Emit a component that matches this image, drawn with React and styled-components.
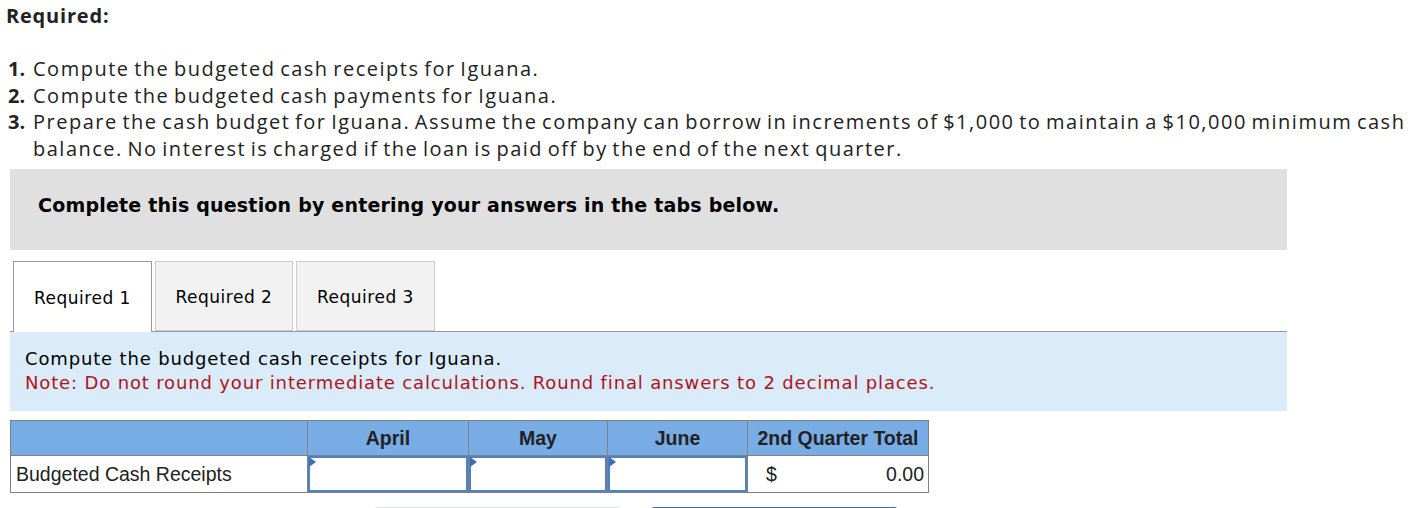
import React from 'react';
import styled, { createGlobalStyle } from 'styled-components';

const GlobalStyle = createGlobalStyle`
  html, body {
    margin: 0;
    padding: 0;
    background: #fff;
  }
  body {
    font-family: "Open Sans", Lato, sans-serif;
    color: #222;
  }
`;

const Page = styled.div`
  padding: 3px 0 0 8px;
  width: 1413px;
  box-sizing: border-box;
`;

const Heading = styled.h3`
  margin: 0 0 0 -2px;
  font-size: 20px;
  font-weight: 700;
  line-height: 26px;
  letter-spacing: 0.8px;
`;

const Steps = styled.ol`
  list-style: none;
  margin: 27px 0 0 0;
  padding: 0;
  font-size: 20px;
  line-height: 26.6px;
  letter-spacing: 1.5px;
  word-spacing: -2px;
`;

const Step = styled.li`
  display: grid;
  grid-template-columns: 25px 1fr;
`;

const StepNum = styled.b`
  font-weight: 700;
  letter-spacing: 0;
`;

const Prompt = styled.div`
  margin: 7px 0 0 2px;
  width: 1277px;
  height: 81px;
  background: #e0e0e0;
  display: flex;
  align-items: center;
  padding: 0 0 10px 28px;
  box-sizing: border-box;
  font-family: "DejaVu Sans", Verdana, sans-serif;
  font-weight: 700;
  font-size: 19px;
  letter-spacing: 0.2px;
  color: #000;
`;

const TabBar = styled.div`
  display: flex;
  gap: 3px;
  margin: 11px 0 0 5px;
  height: 70px;
`;

const Tab = styled.div`
  box-sizing: border-box;
  width: ${p => p.$w}px;
  height: ${p => (p.$active ? 71 : 70)}px;
  display: flex;
  align-items: center;
  justify-content: center;
  font-family: "DejaVu Sans", Verdana, sans-serif;
  font-size: 17px;
  letter-spacing: 0.5px;
  color: #000;
  background: ${p => (p.$active ? '#fff' : '#f2f2f2')};
  border: 1px solid ${p => (p.$active ? '#999' : '#ccc')};
  border-bottom: ${p => (p.$active ? 'none' : '1px solid #ccc')};
  position: relative;
  z-index: 1;
  padding-top: 1px;
`;

const Info = styled.div`
  margin-left: 2px;
  width: 1277px;
  box-sizing: border-box;
  background: #daebf9;
  border-top: 1px solid #999;
  padding: 15px 0 16px 15px;
  font-family: "DejaVu Sans", Verdana, sans-serif;
  font-size: 18px;
  letter-spacing: 0.85px;
  line-height: 24px;
  color: #000;
`;

const Note = styled.div`
  color: #b0141b;
`;

const Grid = styled.table`
  margin: 9px 0 0 2px;
  border-collapse: collapse;
  font-family: "Liberation Sans", Arial, sans-serif;
  font-size: 19.5px;
  color: #222;
`;

const HeadCell = styled.th`
  background: #78ace4;
  border: 1px solid #808080;
  height: 35px;
  width: ${p => p.$w}px;
  padding: 0;
  font-weight: 700;
  text-align: center;
  box-sizing: border-box;
`;

const LabelCell = styled.td`
  border: 1px solid #808080;
  height: 37px;
  padding: 0 0 0 5px;
  text-align: left;
  box-sizing: border-box;
`;

const InputCell = styled.td`
  border: 1px solid #808080;
  padding: 0;
  height: 37px;
  box-sizing: border-box;
  vertical-align: top;
`;

const Field = styled.div`
  position: relative;
  height: 36px;
  box-sizing: border-box;
  border: 2px solid #4f82c3;
  background: #fff;

  &::before {
    content: '';
    position: absolute;
    left: -1px;
    top: -1px;
    border-top: 5px solid transparent;
    border-bottom: 5px solid transparent;
    border-left: 7px solid #3b6fb5;
  }
`;

const TotalCell = styled.td`
  border: 1px solid #808080;
  height: 37px;
  padding: 0 4px 0 18px;
  box-sizing: border-box;
`;

const Total = styled.div`
  display: flex;
  justify-content: space-between;
`;

const Buttons = styled.div`
  display: flex;
  gap: 32px;
  margin: 14px 0 0 367px;
`;

const Button = styled.div`
  width: 245px;
  height: 40px;
  box-sizing: border-box;
  border: 2px solid ${p => (p.$dark ? '#3a6aa8' : '#dbe4ef')};
  background: ${p => (p.$dark ? '#3a6aa8' : '#fff')};
  border-radius: 2px;
`;

export default function App() {
  return (
    <>
      <GlobalStyle />
      <Page>
        <Heading>Required:</Heading>
        <Steps>
          <Step><StepNum>1.</StepNum><span>Compute the budgeted cash receipts for Iguana.</span></Step>
          <Step><StepNum>2.</StepNum><span>Compute the budgeted cash payments for Iguana.</span></Step>
          <Step>
            <StepNum>3.</StepNum>
            <span>
              Prepare the cash budget for Iguana. Assume the company can borrow in increments of $1,000 to maintain a $10,000 minimum cash
              balance. No interest is charged if the loan is paid off by the end of the next quarter.
            </span>
          </Step>
        </Steps>
        <Prompt>Complete this question by entering your answers in the tabs below.</Prompt>
        <TabBar>
          <Tab $active $w={139}>Required 1</Tab>
          <Tab $w={138}>Required 2</Tab>
          <Tab $w={139}>Required 3</Tab>
        </TabBar>
        <Info>
          <div>Compute the budgeted cash receipts for Iguana.</div>
          <Note>Note: Do not round your intermediate calculations. Round final answers to 2 decimal places.</Note>
        </Info>
        <Grid>
          <thead>
            <tr>
              <HeadCell $w={297} />
              <HeadCell $w={161}>April</HeadCell>
              <HeadCell $w={139}>May</HeadCell>
              <HeadCell $w={140}>June</HeadCell>
              <HeadCell $w={181}>2nd Quarter Total</HeadCell>
            </tr>
          </thead>
          <tbody>
            <tr>
              <LabelCell>Budgeted Cash Receipts</LabelCell>
              <InputCell><Field /></InputCell>
              <InputCell><Field /></InputCell>
              <InputCell><Field /></InputCell>
              <TotalCell>
                <Total><span>$</span><span>0.00</span></Total>
              </TotalCell>
            </tr>
          </tbody>
        </Grid>
        <Buttons>
          <Button />
          <Button $dark />
        </Buttons>
      </Page>
    </>
  );
}
